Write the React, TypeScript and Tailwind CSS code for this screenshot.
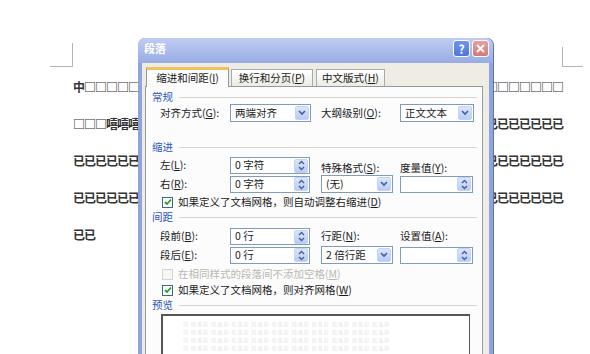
import React from 'react'

const docLines = [
  ['中□□□□□', '□□□□□□□'],
  ['□□□嘻嘻嘻', '已已已已已已已'],
  ['已已已已已已', '已已已已已已已'],
  ['已已已已已已', '已已已已已已已'],
]

function Chevron() {
  return (
    <svg width="8" height="6" viewBox="0 0 8 6">
      <polyline points="1,1 4,4 7,1" fill="none" stroke="#4a5f8c" strokeWidth="1.6" />
    </svg>
  )
}

function SpinArrows() {
  return (
    <svg width="7" height="11" viewBox="0 0 7 11">
      <polyline points="1,4 3.5,1.5 6,4" fill="none" stroke="#4a5f8c" strokeWidth="1.4" />
      <polyline points="1,7 3.5,9.5 6,7" fill="none" stroke="#4a5f8c" strokeWidth="1.4" />
    </svg>
  )
}

function FieldButton({ children }: { children: React.ReactNode }) {
  return (
    <div className="w-[14px] h-[14px] mr-[1px] rounded-[2px] border border-[#c3d3f7] bg-linear-to-b from-[#dbe5fc] to-[#b8ccf7] flex items-center justify-center">
      {children}
    </div>
  )
}

function SelectBox({ value, className }: { value: string; className: string }) {
  return (
    <div className={`h-[18px] border border-[#7f9db9] bg-white flex items-center ${className}`}>
      <span className="flex-1 pl-[4px] text-[10.5px] leading-none text-[#1a1a1a] whitespace-nowrap">{value}</span>
      <FieldButton>
        <Chevron />
      </FieldButton>
    </div>
  )
}

function Spinner({ value, className }: { value: string; className: string }) {
  return (
    <div className={`h-[17px] border border-[#7f9db9] bg-white flex items-center ${className}`}>
      <span className="flex-1 pl-[4px] text-[10.5px] leading-none text-[#1a1a1a] whitespace-nowrap">{value}</span>
      <FieldButton>
        <SpinArrows />
      </FieldButton>
    </div>
  )
}

function Checkbox({ checked, disabled }: { checked?: boolean; disabled?: boolean }) {
  return (
    <div
      className={`w-[11px] h-[11px] shrink-0 border flex items-center justify-center ${
        disabled ? 'border-[#d6d5cc] bg-[#f7f7f3]' : 'border-[#3a6f7a] bg-white'
      }`}
    >
      {checked && (
        <svg width="8" height="8" viewBox="0 0 8 8">
          <polyline points="1,4 3,6 7,1.5" fill="none" stroke="#21a121" strokeWidth="1.8" />
        </svg>
      )}
    </div>
  )
}

function Header({ text }: { text: string }) {
  return (
    <div className="h-[12px] flex items-center pl-[6px] pr-[5px]">
      <span className="text-[10.5px] leading-none text-[#2d55c0]">{text}</span>
      <div className="flex-1 h-px bg-[#d6d5cb] ml-[6px]" />
    </div>
  )
}

function Label({ text, k, className = '' }: { text: string; k: string; className?: string }) {
  return (
    <span className={`text-[10.5px] leading-none text-[#1a1a1a] whitespace-nowrap ${className}`}>
      {text}(<u>{k}</u>):
    </span>
  )
}

export default function App() {
  return (
    <div className="relative w-[590px] h-[354px] overflow-hidden bg-white font-['Noto_Sans_CJK_SC',sans-serif]">
      {/* document page */}
      <div className="pt-[43px]">
        <div className="ml-[50px] w-[533px] h-[24px] flex justify-between items-end">
          <div className="w-[23px] h-[24px] border-r border-b border-[#b5b5b5]" />
          <div className="w-[21px] h-[20px] border-l border-b border-[#b5b5b5]" />
        </div>
        <div className="ml-[73px] w-[490px] mt-[1px] text-[12px] tracking-[-1px] font-bold text-[#333]">
          {docLines.map(([left, right], i) => (
            <div key={i} className="h-[37px] leading-[37px] flex justify-between whitespace-nowrap">
              <span>{left}</span>
              <span>{right}</span>
            </div>
          ))}
          <div className="h-[37px] leading-[37px]">已已</div>
        </div>
      </div>

      {/* 段落 dialog */}
      <div className="absolute left-[138px] top-[38px] w-[355px] h-[330px] flex flex-col rounded-t-[7px] overflow-hidden bg-[#8fa3dd] shadow-[1px_0_0_#5c70b8]">
        <div className="h-[25px] shrink-0 flex items-start pl-[6px] pr-[4px] bg-linear-to-b from-[#c0cdf2] to-[#98ace2]">
          <span className="flex-1 pt-[5px] text-[11px] font-bold leading-none text-white">段落</span>
          <div className="flex gap-[2px] pt-[2px]">
            <div className="w-[17px] h-[17px] rounded-[3px] border border-white bg-linear-to-b from-[#6f95ea] to-[#4f76d8] flex items-center justify-center text-white text-[12px] font-bold leading-none">
              ?
            </div>
            <div className="w-[17px] h-[17px] rounded-[3px] border border-white bg-linear-to-b from-[#e8a0a0] to-[#d57878] flex items-center justify-center">
              <svg width="9" height="9" viewBox="0 0 9 9">
                <path d="M1 1 L8 8 M8 1 L1 8" stroke="white" strokeWidth="2" />
              </svg>
            </div>
          </div>
        </div>

        <div className="flex-1 mx-[4px] bg-[#efede3] pt-[4px] pl-[3px] pr-[6px] flex flex-col">
          {/* tabs */}
          <div className="h-[19px] flex items-end pl-[1px] relative z-10">
            <div className="w-[83px] h-[20px] -mb-px border border-b-0 border-[#919b9c] border-t-[3px] border-t-[#f2c15e] bg-[#fcfcfd] flex items-center justify-center text-[10.5px] leading-none text-[#1a1a1a]">
              缩进和间距(<u>I</u>)
            </div>
            <div className="w-[82px] h-[17px] ml-[2px] border border-b-0 border-[#a4acae] bg-linear-to-b from-white to-[#ecebe4] flex items-center justify-center text-[10.5px] leading-none text-[#1a1a1a]">
              换行和分页(<u>P</u>)
            </div>
            <div className="w-[69px] h-[17px] ml-[3px] border border-b-0 border-[#a4acae] bg-linear-to-b from-white to-[#ecebe4] flex items-center justify-center text-[10.5px] leading-none text-[#1a1a1a]">
              中文版式(<u>H</u>)
            </div>
          </div>

          {/* tab panel */}
          <div className="flex-1 border border-[#919b9c] bg-[#fcfcfd] flex flex-col">
            <div className="mt-[4px]">
              <Header text="常规" />
            </div>
            <div className="mt-[1px] pl-[14px] flex items-center">
              <Label text="对齐方式" k="G" className="w-[70px]" />
              <SelectBox value="两端对齐" className="w-[81px]" />
              <Label text="大纲级别" k="O" className="w-[79px] ml-[10px]" />
              <SelectBox value="正文文本" className="w-[74px]" />
            </div>

            <div className="mt-[19px]">
              <Header text="缩进" />
            </div>
            <div className="mt-[4px] pl-[14px] flex items-end h-[17px]">
              <Label text="左" k="L" className="w-[70px] self-center" />
              <Spinner value="0 字符" className="w-[80px]" />
              <Label text="特殊格式" k="S" className="w-[79px] ml-[11px] pb-[1px]" />
              <Label text="度量值" k="Y" className="pb-[1px]" />
            </div>
            <div className="mt-[1px] pl-[14px] flex items-center">
              <Label text="右" k="R" className="w-[70px]" />
              <Spinner value="0 字符" className="w-[80px]" />
              <SelectBox value="(无)" className="w-[72px] h-[17px] ml-[11px]" />
              <Spinner value="" className="w-[73px] ml-[7px]" />
            </div>
            <div className="mt-[3px] h-[12px] pl-[16px] flex items-center gap-[5px]">
              <Checkbox checked />
              <span className="text-[10.5px] leading-none text-[#1a1a1a] whitespace-nowrap">
                如果定义了文档网格，则自动调整右缩进(<u>D</u>)
              </span>
            </div>

            <div className="mt-[3px]">
              <Header text="间距" />
            </div>
            <div className="mt-[5px] pl-[14px] flex items-center h-[17px]">
              <Label text="段前" k="B" className="w-[70px]" />
              <Spinner value="0 行" className="w-[80px]" />
              <Label text="行距" k="N" className="w-[79px] ml-[11px]" />
              <Label text="设置值" k="A" />
            </div>
            <div className="mt-[1px] pl-[14px] flex items-center">
              <Label text="段后" k="E" className="w-[70px]" />
              <Spinner value="0 行" className="w-[80px]" />
              <SelectBox value="2 倍行距" className="w-[72px] h-[17px] ml-[11px]" />
              <Spinner value="" className="w-[73px] ml-[7px]" />
            </div>
            <div className="mt-[4px] h-[12px] pl-[16px] flex items-center gap-[5px]">
              <Checkbox disabled />
              <span className="text-[10.5px] leading-none text-[#b9b8ae] whitespace-nowrap">
                在相同样式的段落间不添加空格(<u>M</u>)
              </span>
            </div>
            <div className="mt-[4px] h-[12px] pl-[16px] flex items-center gap-[5px]">
              <Checkbox checked />
              <span className="text-[10.5px] leading-none text-[#1a1a1a] whitespace-nowrap">
                如果定义了文档网格，则对齐网格(<u>W</u>)
              </span>
            </div>

            <div className="mt-[3px]">
              <Header text="预览" />
            </div>
            <div className="mt-[3px] ml-[15px] w-[309px] flex-1 border-t-2 border-l-2 border-r border-[#555] bg-white pt-[5px] pl-[20px] flex flex-col gap-[2px]">
              {[0, 1, 2, 3].map((r) => (
                <div key={r} className="text-[5px] leading-[6px] tracking-[1px] text-[#e4e4e4] whitespace-nowrap overflow-hidden w-[230px]">
                  前 段落前 段落前 段落前 段落前 段落前 段落前 段落前 段落前 段落前 段落前
                </div>
              ))}
            </div>
          </div>
        </div>
      </div>
    </div>
  )
}
